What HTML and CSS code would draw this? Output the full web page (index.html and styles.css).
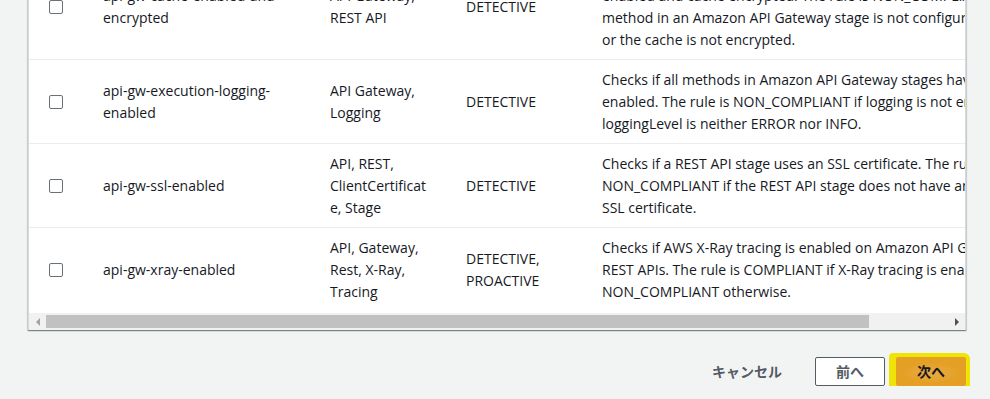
FILE: index.html
```html
<!doctype html>
<html>
    <head>
        <meta charset="utf-8">
        <title>ルールの選択</title>
        <link rel="stylesheet" href="styles.css">
    </head>
    <body>
        <main class="page">
            <section class="rules-panel">
                <div class="scroller">
                    <table class="rules-table">
                        <colgroup>
                            <col class="col-select">
                            <col class="col-name">
                            <col class="col-labels">
                            <col class="col-type">
                            <col class="col-desc">
                        </colgroup>
                        <tbody>
                            <tr>
                                <td class="cell-select"><span class="checkbox"></span></td>
                                <td>api-gw-cache-enabled-and-encrypted</td>
                                <td class="cell-labels">API Gateway, REST API</td>
                                <td>DETECTIVE</td>
                                <td>Checks if all methods in Amazon API Gateway stages have cache enabled and cache encrypted. The rule is NON_COMPLIANT if any method in an Amazon API Gateway stage is not configured to cache or the cache is not encrypted.</td>
                            </tr>
                            <tr>
                                <td class="cell-select"><span class="checkbox"></span></td>
                                <td>api-gw-execution-logging-enabled</td>
                                <td class="cell-labels">API Gateway, Logging</td>
                                <td>DETECTIVE</td>
                                <td>Checks if all methods in Amazon API Gateway stages have logging enabled. The rule is NON_COMPLIANT if logging is not enabled, or if loggingLevel is neither ERROR nor INFO.</td>
                            </tr>
                            <tr>
                                <td class="cell-select"><span class="checkbox"></span></td>
                                <td>api-gw-ssl-enabled</td>
                                <td class="cell-labels">API, REST, ClientCertificate, Stage</td>
                                <td>DETECTIVE</td>
                                <td>Checks if a REST API stage uses an SSL certificate. The rule is NON_COMPLIANT if the REST API stage does not have an associated SSL certificate.</td>
                            </tr>
                            <tr>
                                <td class="cell-select"><span class="checkbox"></span></td>
                                <td>api-gw-xray-enabled</td>
                                <td class="cell-labels">API, Gateway, Rest, X-Ray, Tracing</td>
                                <td>DETECTIVE, PROACTIVE</td>
                                <td>Checks if AWS X-Ray tracing is enabled on Amazon API Gateway REST APIs. The rule is COMPLIANT if X-Ray tracing is enabled and NON_COMPLIANT otherwise.</td>
                            </tr>
                        </tbody>
                    </table>
                </div>
                <div class="hscroll">
                    <span class="hscroll-btn"><span class="arrow-left"></span></span>
                    <span class="hscroll-track"><span class="hscroll-thumb"></span></span>
                    <span class="hscroll-btn"><span class="arrow-right"></span></span>
                </div>
            </section>

            <div class="actions">
                <button class="btn btn-link">キャンセル</button>
                <button class="btn btn-normal">前へ</button>
                <button class="btn btn-primary">次へ</button>
            </div>
        </main>
    </body>
</html>
```

FILE: styles.css
```css
:root {
    --page-bg: #f2f3f3;
    --text: #16191f;
    --text-muted: #545b64;
    --row-border: #eaeded;
    --panel-border: #d5dbdb;

    --scroll-track: #f1f1f1;
    --scroll-thumb: #c1c1c1;

    --primary-bg: #e4a024;
    --primary-glow: #e9ab47;
    --highlight: #f0e406;
}

body {
    margin: 0;
    background: var(--page-bg);
    font-family: 'Open Sans', 'Noto Sans CJK JP', sans-serif;
    font-size: 14px;
    line-height: 22px;
    color: var(--text);
}

.page {
    margin-top: -47px;
    padding: 0 24px 0 28px;
}

.rules-panel {
    background: white;
    border: 1px solid var(--panel-border);
    border-bottom: none;
    box-shadow: 0 1px 1px 0 rgba(0, 28, 36, 0.35), 1px 1px 1px 0 rgba(0, 28, 36, 0.12), -1px 1px 1px 0 rgba(0, 28, 36, 0.12);
}

.scroller {
    overflow: hidden;
}

.rules-table {
    table-layout: fixed;
    width: 1037px;
    border-collapse: collapse;
}

.col-select { width: 54px; }
.col-name { width: 227px; }
.col-labels { width: 136px; }
.col-type { width: 136px; }
.col-desc { width: 484px; }

.rules-table td {
    padding: 9px 20px 8px;
    vertical-align: middle;
    border-bottom: 1px solid var(--row-border);
}

.rules-table tr:last-child td {
    border-bottom: none;
    padding-bottom: 10px;
}

.rules-table .cell-labels {
    overflow-wrap: anywhere;
    padding-right: 18px;
}

.cell-select {
    line-height: 0;
}

.checkbox {
    display: inline-block;
    width: 12px;
    height: 12px;
    border: 1px solid #687078;
    border-radius: 2px;
}

/* horizontal scrollbar, shown at its leftmost position */
.hscroll {
    display: flex;
    height: 17px;
    background: var(--scroll-track);
}

.hscroll-btn {
    width: 17px;
    display: flex;
    align-items: center;
    justify-content: center;
}

.hscroll-track {
    flex: 1;
    display: flex;
    align-items: center;
}

.hscroll-thumb {
    width: 823px;
    height: 13px;
    background: var(--scroll-thumb);
}

.arrow-left {
    border-top: 4px solid transparent;
    border-bottom: 4px solid transparent;
    border-right: 4px solid #a3a3a3;
}

.arrow-right {
    border-top: 4px solid transparent;
    border-bottom: 4px solid transparent;
    border-left: 4px solid #505050;
}

.actions {
    display: flex;
    justify-content: flex-end;
    align-items: center;
    gap: 11px;
    margin-top: 27px;
    isolation: isolate;
}

.btn {
    all: unset;
    font-family: 'Open Sans', 'Noto Sans CJK JP', sans-serif;
    font-size: 14px;
    font-weight: 700;
    line-height: 21px;
    height: 21px;
    padding: 3px 20px;
    border: 1px solid transparent;
    border-radius: 2px;
    white-space: nowrap;
}

.btn-link {
    color: var(--text-muted);
    margin-right: 1px;
}

.btn-normal {
    background: white;
    border-color: var(--text-muted);
    color: var(--text-muted);
}

.btn-primary {
    position: relative;
    color: var(--text);
    background: radial-gradient(ellipse 30px 10px at 50% 55%, var(--primary-glow), var(--primary-bg));
}

/* yellow highlighter mark over the primary button */
.btn-primary::before {
    content: "";
    position: absolute;
    top: -5px;
    left: -8px;
    right: -5px;
    bottom: -8px;
    background: var(--highlight);
    border-radius: 4px 6px 3px 8px;
    z-index: -1;
}
```
